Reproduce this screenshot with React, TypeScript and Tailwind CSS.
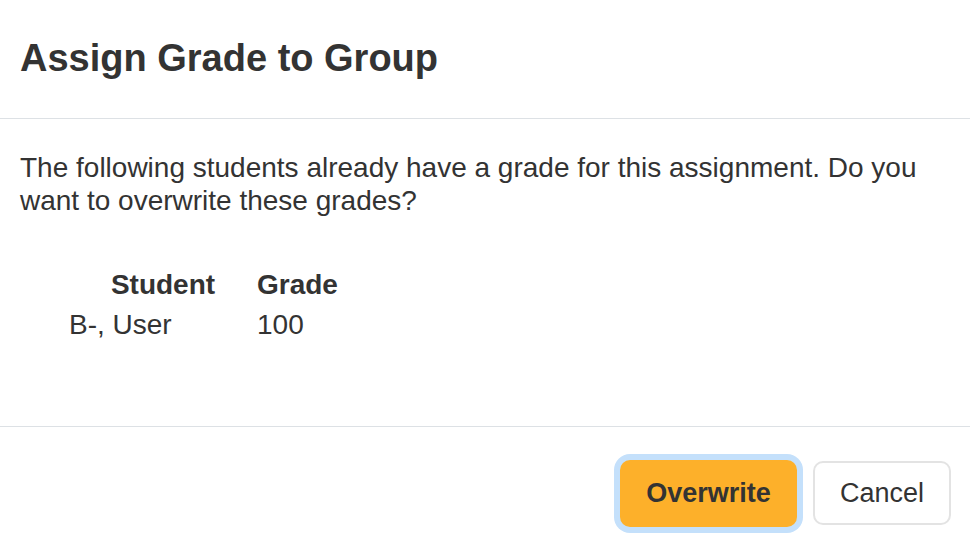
import React from "react";

const rows = [{ student: "B-, User", grade: "100" }];

export default function App() {
  return (
    <div
      className="w-[970px] h-[552px] bg-white text-[#333333] overflow-hidden"
      style={{ fontFamily: '"Liberation Sans", Arial, sans-serif' }}
    >
      {/* header */}
      <div className="h-[119px] flex items-center px-5 pb-[2px] border-b border-[#dde1e5]">
        <h1 className="text-[38px] leading-none font-bold">Assign Grade to Group</h1>
      </div>

      {/* body */}
      <div className="h-[307px] px-5 pt-[32px]">
        <p className="text-[28px] leading-[33px]">
          The following students already have a grade for this assignment. Do you want to
          overwrite these grades?
        </p>

        <table className="ml-[49px] mt-[48px] text-[28px] leading-[40px] border-collapse">
          <thead>
            <tr>
              <th className="w-[188px] p-0 text-center font-bold">Student</th>
              <th className="p-0 text-left font-bold">Grade</th>
            </tr>
          </thead>
          <tbody>
            {rows.map((r) => (
              <tr key={r.student}>
                <td className="p-0 text-left">{r.student}</td>
                <td className="p-0 text-left">{r.grade}</td>
              </tr>
            ))}
          </tbody>
        </table>
      </div>

      {/* footer */}
      <div className="border-t border-[#dde1e5] pt-[34px] pr-[19px] flex justify-end">
        <div className="h-[64px] flex items-center gap-4">
          <button className="w-[177px] h-[67px] rounded-[10px] bg-[#fdb02a] ring-[6px] ring-[#c4e0fb] text-[27px] font-bold text-[#333333]">
            Overwrite
          </button>
          <button className="w-[138px] h-[64px] rounded-[10px] border-2 border-[#e3e3e3] bg-white text-[27px] text-[#333333]">
            Cancel
          </button>
        </div>
      </div>
    </div>
  );
}
